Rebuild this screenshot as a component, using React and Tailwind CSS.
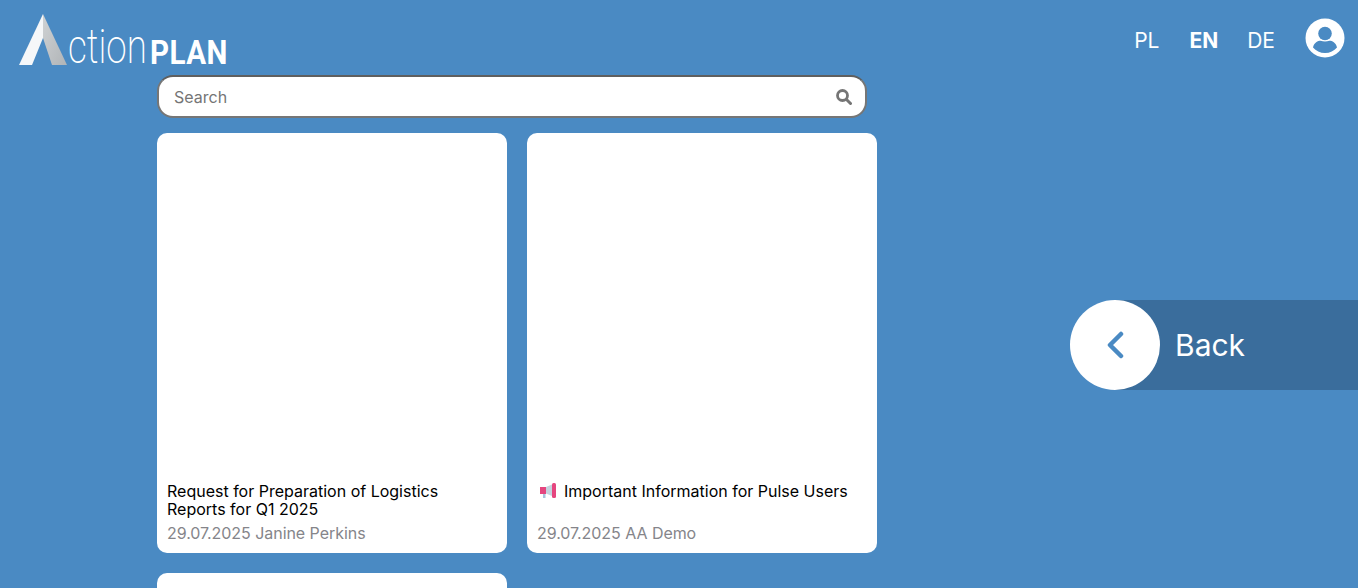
import React from 'react';

const cards = [
  { title: 'Request for Preparation of Logistics Reports for Q1 2025', date: '29.07.2025', author: 'Janine Perkins' },
  { title: 'Important Information for Pulse Users', date: '29.07.2025', author: 'AA Demo', megaphone: true },
  { title: '', date: '', author: '' },
];

function LogoMark() {
  return (
    <svg width="49" height="52" viewBox="0 0 49 52" className="shrink-0">
      <defs>
        <linearGradient id="logoShade" x1="0" y1="0" x2="1" y2="1">
          <stop offset="0" stopColor="#cfd2d4" />
          <stop offset="1" stopColor="#b0b4b7" />
        </linearGradient>
      </defs>
      <path d="M24 0 L0 51 L13 51 L24 24 Z" fill="#f5f7f9" />
      <path d="M24 0 L24 24 L33 51 L48 51 Z" fill="url(#logoShade)" />
    </svg>
  );
}

function Megaphone() {
  return (
    <svg width="17" height="17" viewBox="0 0 17 17" className="shrink-0">
      <rect x="0" y="4" width="6" height="7" fill="#e5467f" />
      <path d="M6 4 L12 1.500 L12 13 L6 10.500 Z" fill="#c5d3de" />
      <rect x="3" y="11" width="2.500" height="4" fill="#a9c4dc" />
      <rect x="12" y="0" width="4" height="15" rx="1.500" fill="#e5467f" />
    </svg>
  );
}

function Card({ card }) {
  return (
    <div className="flex h-[420px] w-[350px] flex-col justify-end rounded-[10px] bg-white px-2.5 pb-2.5">
      {card.title && (
        <>
          <div className="flex h-[36px] items-start gap-[7px] text-[16px] leading-[18px] text-black">
            {card.megaphone && <span className="ml-[3px] mt-[1px]"><Megaphone /></span>}
            <span>{card.title}</span>
          </div>
          <div className="mt-[5px] text-[16px] leading-[20px] tracking-[-0.05px] text-[#85858a]">
            {card.date} {card.author}
          </div>
        </>
      )}
    </div>
  );
}

export default function App() {
  return (
    <div className="relative h-screen overflow-hidden bg-[#4a8ac3] font-['Inter',sans-serif]">
      <header className="flex h-[75px] items-start justify-between">
        <div className="ml-[19px] mt-[14px] flex items-end">
          <LogoMark />
          <div className="flex h-[52px] w-[160px] items-end font-['Roboto',sans-serif] text-white">
            <span className="w-[82px] origin-left scale-x-[0.75] text-[49px] font-extralight leading-[38px]">ction</span>
            <span className="origin-left scale-x-[0.87] text-[34px] font-bold leading-[28px] tracking-[0.5px]">PLAN</span>
          </div>
        </div>
        <div className="mr-[13px] mt-[18px] flex h-[40px] items-center text-[21px] text-white">
          <span className="mt-[6px]">PL</span>
          <span className="ml-[30px] mt-[6px] font-bold">EN</span>
          <span className="ml-[29px] mr-[30px] mt-[6px]">DE</span>
          <svg width="40" height="40" viewBox="0 0 40 40">
            <circle cx="20" cy="20" r="19.500" fill="#fff" />
            <circle cx="20" cy="15.500" r="6.800" fill="#4a8ac3" />
            <path d="M8 29.500 C9 24.500 13 22.800 15.500 22.800 C18.500 23.800 21.500 23.800 24.500 22.800 C27 22.800 31 24.500 32 29.500 C29 33 25 35 20 35 C15 35 11 33 8 29.500 Z" fill="#4a8ac3" />
          </svg>
        </div>
      </header>

      <main className="ml-[157px] w-[720px]">
        <div className="flex h-[43px] w-[710px] items-center justify-between rounded-[16px] border-2 border-[#767676] border-t-[#5f5f5f] bg-white pl-[15px] pr-[13px]">
          <span className="text-[16px] text-[#757575]">Search</span>
          <svg width="16" height="16" viewBox="0 0 16 16" fill="none" stroke="#757575">
            <circle cx="6.500" cy="6.500" r="5" strokeWidth="2.800" />
            <path d="M10.500 10.500 L14.500 14.500" strokeWidth="3" strokeLinecap="round" />
          </svg>
        </div>
        <div className="mt-[15px] grid grid-cols-[350px_350px] gap-5">
          {cards.map((card, i) => (
            <Card key={i} card={card} />
          ))}
        </div>
      </main>

      <div className="absolute right-0 top-[300px] flex h-[90px] w-[288px] items-center">
        <div className="absolute inset-y-0 left-[45px] right-0 bg-[#3a6d9c]" />
        <div className="relative flex h-[90px] w-[90px] items-center justify-center rounded-full bg-white">
          <svg width="18" height="28" viewBox="0 0 18 28" fill="none">
            <path d="M15 3 L4 14 L15 25" stroke="#4a8ac3" strokeWidth="4.500" strokeLinecap="round" strokeLinejoin="round" />
          </svg>
        </div>
        <span className="relative ml-[15px] text-[30px] text-white">Back</span>
      </div>
    </div>
  );
}
